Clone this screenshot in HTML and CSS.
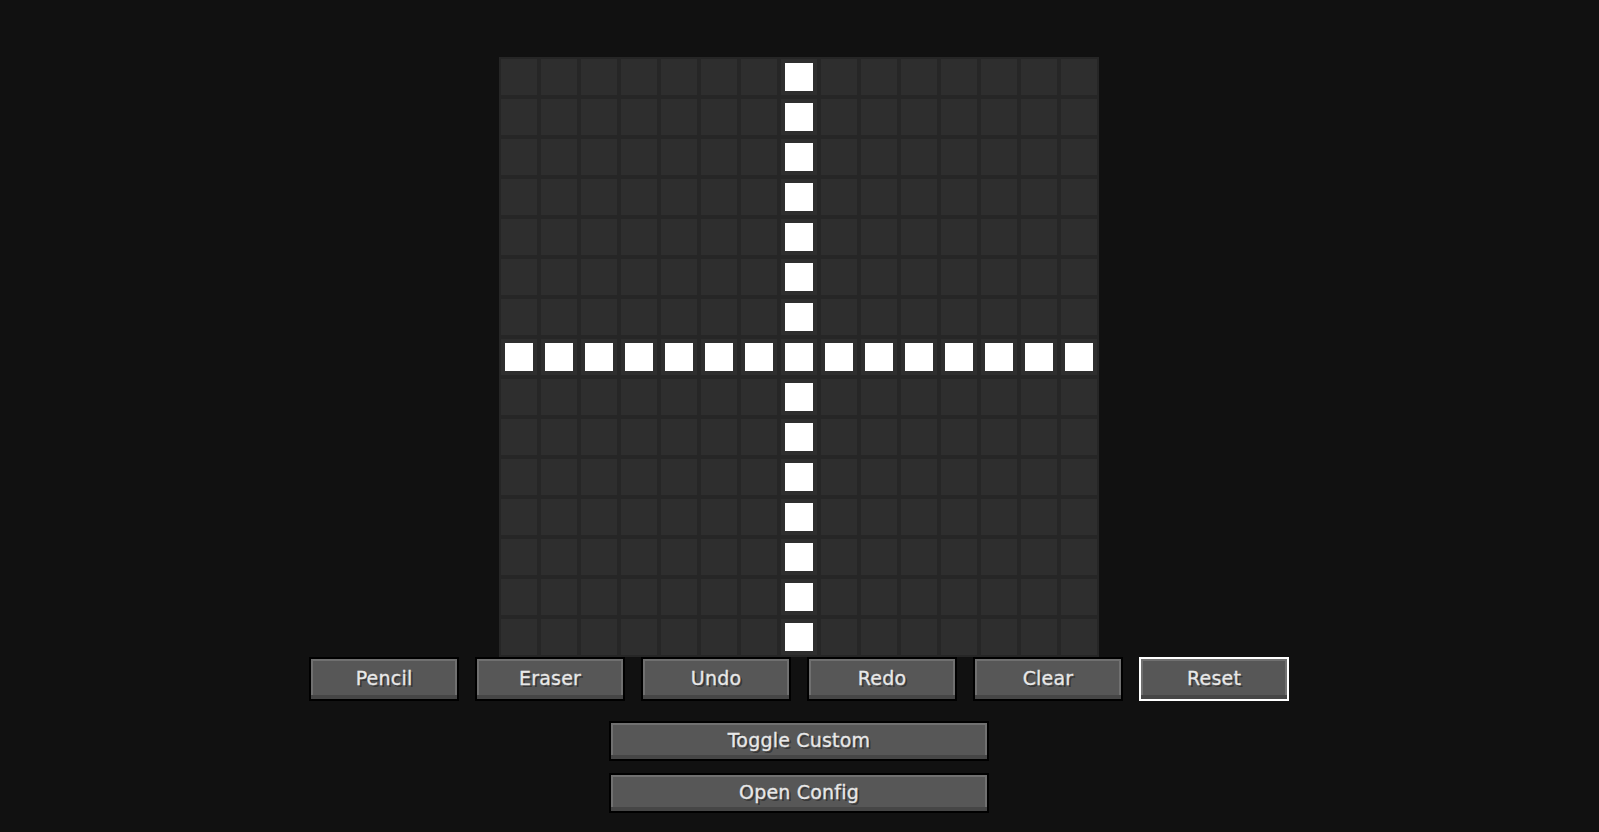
FILE: index.html
```html
<!DOCTYPE html>
<html>
<head>
<meta charset="utf-8">
<link rel="stylesheet" href="styles.css">
</head>
<body>
<main class="screen">
  <div class="grid">
    <div class="c"></div><div class="c"></div><div class="c"></div><div class="c"></div><div class="c"></div><div class="c"></div><div class="c"></div><div class="c on"></div><div class="c"></div><div class="c"></div><div class="c"></div><div class="c"></div><div class="c"></div><div class="c"></div><div class="c"></div>
    <div class="c"></div><div class="c"></div><div class="c"></div><div class="c"></div><div class="c"></div><div class="c"></div><div class="c"></div><div class="c on"></div><div class="c"></div><div class="c"></div><div class="c"></div><div class="c"></div><div class="c"></div><div class="c"></div><div class="c"></div>
    <div class="c"></div><div class="c"></div><div class="c"></div><div class="c"></div><div class="c"></div><div class="c"></div><div class="c"></div><div class="c on"></div><div class="c"></div><div class="c"></div><div class="c"></div><div class="c"></div><div class="c"></div><div class="c"></div><div class="c"></div>
    <div class="c"></div><div class="c"></div><div class="c"></div><div class="c"></div><div class="c"></div><div class="c"></div><div class="c"></div><div class="c on"></div><div class="c"></div><div class="c"></div><div class="c"></div><div class="c"></div><div class="c"></div><div class="c"></div><div class="c"></div>
    <div class="c"></div><div class="c"></div><div class="c"></div><div class="c"></div><div class="c"></div><div class="c"></div><div class="c"></div><div class="c on"></div><div class="c"></div><div class="c"></div><div class="c"></div><div class="c"></div><div class="c"></div><div class="c"></div><div class="c"></div>
    <div class="c"></div><div class="c"></div><div class="c"></div><div class="c"></div><div class="c"></div><div class="c"></div><div class="c"></div><div class="c on"></div><div class="c"></div><div class="c"></div><div class="c"></div><div class="c"></div><div class="c"></div><div class="c"></div><div class="c"></div>
    <div class="c"></div><div class="c"></div><div class="c"></div><div class="c"></div><div class="c"></div><div class="c"></div><div class="c"></div><div class="c on"></div><div class="c"></div><div class="c"></div><div class="c"></div><div class="c"></div><div class="c"></div><div class="c"></div><div class="c"></div>
    <div class="c on"></div><div class="c on"></div><div class="c on"></div><div class="c on"></div><div class="c on"></div><div class="c on"></div><div class="c on"></div><div class="c on"></div><div class="c on"></div><div class="c on"></div><div class="c on"></div><div class="c on"></div><div class="c on"></div><div class="c on"></div><div class="c on"></div>
    <div class="c"></div><div class="c"></div><div class="c"></div><div class="c"></div><div class="c"></div><div class="c"></div><div class="c"></div><div class="c on"></div><div class="c"></div><div class="c"></div><div class="c"></div><div class="c"></div><div class="c"></div><div class="c"></div><div class="c"></div>
    <div class="c"></div><div class="c"></div><div class="c"></div><div class="c"></div><div class="c"></div><div class="c"></div><div class="c"></div><div class="c on"></div><div class="c"></div><div class="c"></div><div class="c"></div><div class="c"></div><div class="c"></div><div class="c"></div><div class="c"></div>
    <div class="c"></div><div class="c"></div><div class="c"></div><div class="c"></div><div class="c"></div><div class="c"></div><div class="c"></div><div class="c on"></div><div class="c"></div><div class="c"></div><div class="c"></div><div class="c"></div><div class="c"></div><div class="c"></div><div class="c"></div>
    <div class="c"></div><div class="c"></div><div class="c"></div><div class="c"></div><div class="c"></div><div class="c"></div><div class="c"></div><div class="c on"></div><div class="c"></div><div class="c"></div><div class="c"></div><div class="c"></div><div class="c"></div><div class="c"></div><div class="c"></div>
    <div class="c"></div><div class="c"></div><div class="c"></div><div class="c"></div><div class="c"></div><div class="c"></div><div class="c"></div><div class="c on"></div><div class="c"></div><div class="c"></div><div class="c"></div><div class="c"></div><div class="c"></div><div class="c"></div><div class="c"></div>
    <div class="c"></div><div class="c"></div><div class="c"></div><div class="c"></div><div class="c"></div><div class="c"></div><div class="c"></div><div class="c on"></div><div class="c"></div><div class="c"></div><div class="c"></div><div class="c"></div><div class="c"></div><div class="c"></div><div class="c"></div>
    <div class="c"></div><div class="c"></div><div class="c"></div><div class="c"></div><div class="c"></div><div class="c"></div><div class="c"></div><div class="c on"></div><div class="c"></div><div class="c"></div><div class="c"></div><div class="c"></div><div class="c"></div><div class="c"></div><div class="c"></div>
  </div>
  <div class="tools">
    <div class="btn">Pencil</div>
    <div class="btn">Eraser</div>
    <div class="btn">Undo</div>
    <div class="btn">Redo</div>
    <div class="btn">Clear</div>
    <div class="btn selected">Reset</div>
  </div>
  <div class="wide-list">
    <div class="btn wide">Toggle Custom</div>
    <div class="btn wide">Open Config</div>
  </div>
</main>
</body>
</html>
```
FILE: styles.css
```css
html, body {
  margin: 0;
  padding: 0;
  background: #111111;
  height: 100%;
}
.screen {
  display: flex;
  flex-direction: column;
  align-items: center;
  padding-top: 57px;
  padding-right: 1px;
  font-family: "DejaVu Sans", "Liberation Sans", sans-serif;
}
.grid {
  box-sizing: border-box;
  width: 600px;
  height: 600px;
  padding: 2px;
  background: #262626;
  display: grid;
  grid-template-columns: repeat(15, 36px);
  grid-template-rows: repeat(15, 36px);
  gap: 4px;
}
.c {
  background: #2e2e2e;
}
.c.on {
  background: #ffffff;
  box-shadow: inset 0 0 0 4px #2e2e2e;
}
.tools {
  display: flex;
  gap: 16px;
}
.btn {
  box-sizing: border-box;
  width: 150px;
  height: 44px;
  border: 2px solid #000000;
  background: #575757;
  box-shadow: inset 0 -4px 0 #464646, inset 0 0 0 2px #707070;
  color: #e8e8e8;
  font-size: 19px;
  letter-spacing: 0.2px;
  text-shadow: 2px 2px 0 #383838;
  -webkit-text-stroke: 0.3px #e8e8e8;
  display: flex;
  align-items: center;
  justify-content: center;
  padding-bottom: 3px;
}
.btn.selected {
  border-color: #ffffff;
}
.wide-list {
  display: flex;
  flex-direction: column;
  gap: 12px;
  margin-top: 20px;
}
.btn.wide {
  width: 380px;
  height: 40px;
}
```
